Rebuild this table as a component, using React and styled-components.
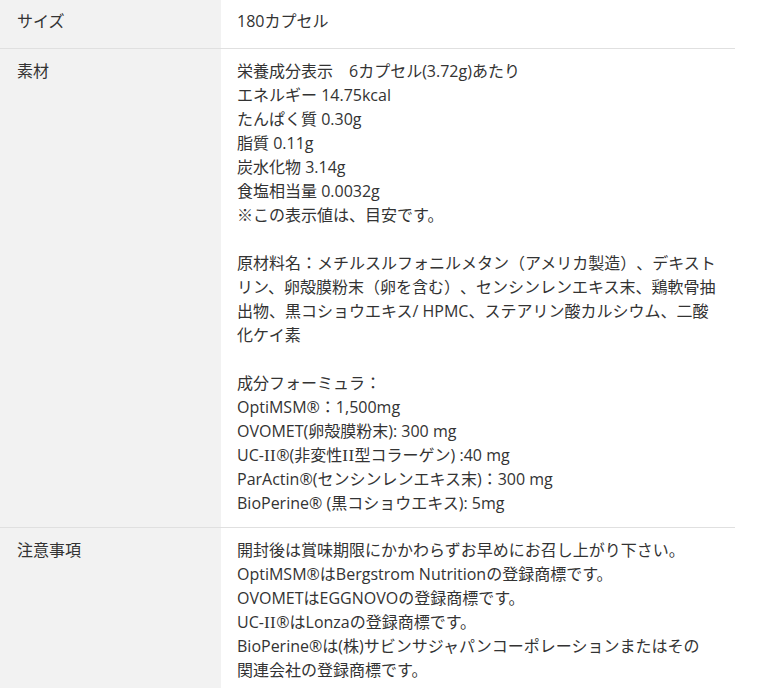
import React from "react";
import styled, { createGlobalStyle } from "styled-components";

const GlobalStyle = createGlobalStyle`
  body {
    margin: 0;
    background: #fff;
    font-family: "Open Sans", "Noto Sans CJK JP", sans-serif;
    color: #333;
  }
`;

const specs = [
  {
    label: "サイズ",
    lines: ["180カプセル"],
  },
  {
    label: "素材",
    lines: [
      "栄養成分表示　6カプセル(3.72g)あたり",
      "エネルギー 14.75kcal",
      "たんぱく質 0.30g",
      "脂質 0.11g",
      "炭水化物 3.14g",
      "食塩相当量 0.0032g",
      "※この表示値は、目安です。",
      "",
      "原材料名：メチルスルフォニルメタン（アメリカ製造）、デキストリン、卵殻膜粉末（卵を含む）、センシンレンエキス末、鶏軟骨抽出物、黒コショウエキス/ HPMC、ステアリン酸カルシウム、二酸化ケイ素",
      "",
      "成分フォーミュラ：",
      "OptiMSM®：1,500mg",
      "OVOMET(卵殻膜粉末): 300 mg",
      "UC-Ⅱ®(非変性Ⅱ型コラーゲン) :40 mg",
      "ParActin®(センシンレンエキス末)：300 mg",
      "BioPerine® (黒コショウエキス): 5mg",
    ],
  },
  {
    label: "注意事項",
    lines: [
      "開封後は賞味期限にかかわらずお早めにお召し上がり下さい。",
      "OptiMSM®はBergstrom Nutritionの登録商標です。",
      "OVOMETはEGGNOVOの登録商標です。",
      "UC-Ⅱ®はLonzaの登録商標です。",
      "BioPerine®は(株)サビンサジャパンコーポレーションまたはその\n関連会社の登録商標です。",
    ],
  },
];

// the roman numeral Ⅱ is drawn with serifs in the original
const renderLine = (text) => {
  const parts = text.split("Ⅱ");
  return parts.map((part, k) => (
    <React.Fragment key={k}>
      {part}
      {k < parts.length - 1 && <Roman>II</Roman>}
    </React.Fragment>
  ));
};

const App = () => {
  return (
    <>
      <GlobalStyle />
      <SpecTable>
        {specs.map((row, i) => (
          <SpecRow key={row.label} $first={i === 0}>
            <LabelCell>{row.label}</LabelCell>
            <ValueCell>
              {row.lines.map((line, j) =>
                line === "" ? (
                  <Blank key={j} />
                ) : (
                  <Line key={j}>{renderLine(line)}</Line>
                )
              )}
            </ValueCell>
          </SpecRow>
        ))}
      </SpecTable>
    </>
  );
};

export default App;

const SpecTable = styled.div`
  width: 735px;
  margin-top: -1px;
`;
const SpecRow = styled.div`
  display: grid;
  grid-template-columns: 221px 1fr;
  min-height: ${(props) => (props.$first ? "49px" : "0")};
  border-bottom: 1px solid #e0e0e0;
  font-size: 16px;
  line-height: 24px;
  text-spacing-trim: space-all;
`;
const LabelCell = styled.div`
  background: #f2f2f2;
  padding: 10px 16px 12px 17px;
  color: #333;
`;
const ValueCell = styled.div`
  padding: 10px 16px 12px 16px;
  color: #333;
`;
const Line = styled.div`
  white-space: pre-line;
  word-break: break-all;
`;
const Roman = styled.span`
  font-family: "Liberation Serif", serif;
  font-size: 17px;
  line-height: 0;
  letter-spacing: 0.5px;
`;
const Blank = styled.div`
  height: 24px;
`;
